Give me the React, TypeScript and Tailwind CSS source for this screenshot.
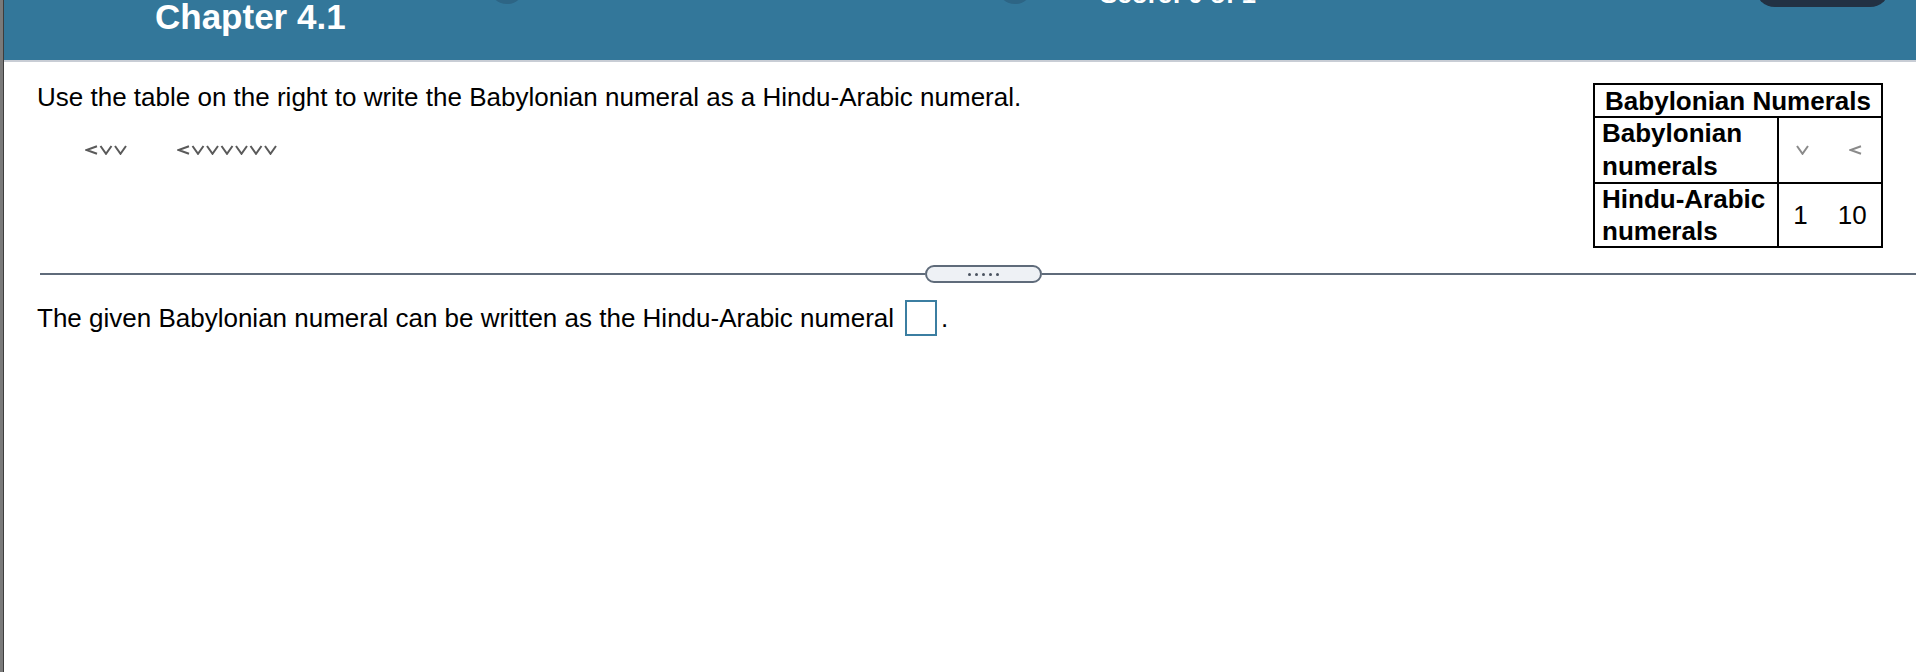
import React from 'react';

const FONT = { fontFamily: '"Liberation Sans", Arial, Helvetica, sans-serif' };

// draws a row of wedge glyphs: '<' = ten, 'v' = one
function Wedges({ marks, color, pitch = 14.5 }: { marks: string; color: string; pitch?: number }) {
  const w = Math.ceil(marks.length * pitch);
  return (
    <svg width={w} height={10} viewBox={`0 0 ${w} 10`} className="block">
      {marks.split('').map((m, i) => {
        const x = i * pitch;
        return m === '<' ? (
          <path key={i} d={`M${x + 12} 1.2 L${x + 1.5} 5 L${x + 12} 8.8`} fill="none" stroke={color} strokeWidth={2} />
        ) : (
          <path key={i} d={`M${x + 1} 1 L${x + 6.5} 8.8 L${x + 12} 1`} fill="none" stroke={color} strokeWidth={2} />
        );
      })}
    </svg>
  );
}

export default function App() {
  return (
    <div className="flex h-[672px] w-full overflow-hidden bg-white text-black" style={FONT}>
      <div className="w-[4px] shrink-0 bg-[#7a7a7a] border-r border-[#3d3d3d]" />

      <div className="flex-1 flex flex-col min-w-0">
        <div className="h-[62px] flex items-start bg-[#33779a] border-b-2 border-[#c8cdd5] overflow-hidden">
          <div className="w-[485px] shrink-0 pl-[151px] -mt-[1px]">
            <h1 className="text-[35px] font-bold leading-none text-white">Chapter 4.1</h1>
          </div>
          <div className="w-[36px] h-[36px] -mt-[32px] rounded-full bg-[#2d6585] shrink-0" />
          <div className="w-[36px] h-[36px] -mt-[32px] ml-[472px] rounded-full bg-[#2d6585] shrink-0" />
          <span className="ml-[67px] -mt-[19px] text-[26px] font-bold leading-none text-white whitespace-nowrap">Score: 0 of 1</span>
          <div className="ml-auto mr-[26px] w-[135px] h-[40px] -mt-[33px] rounded-[22px] bg-[#223143] shrink-0" />
        </div>

        <div className="flex justify-between pl-[33px] pr-[33px] pt-[20px]">
          <div>
            <p className="text-[26px] leading-[30px]">Use the table on the right to write the Babylonian numeral as a Hindu-Arabic numeral.</p>
            <div className="flex items-center mt-[33px] pl-[48px] gap-[48px]">
              <Wedges marks="<vv" color="#5a5a5a" />
              <Wedges marks="<vvvvvv" color="#5a5a5a" />
            </div>
          </div>

          <div className="mt-[1px] w-[290px] border-2 border-black text-[26px] font-bold shrink-0">
            <div className="h-[33px] flex items-center justify-center border-b-2 border-black leading-none">Babylonian Numerals</div>
            <div className="flex h-[66px] border-b-2 border-black">
              <div className="w-[184px] border-r-2 border-black pl-[7px] flex flex-col justify-center leading-[33px]">
                <span>Babylonian</span>
                <span>numerals</span>
              </div>
              <div className="flex-1 flex items-center justify-center gap-[38px]">
                <Wedges marks="v" color="#8a8a8a" />
                <Wedges marks="<" color="#8a8a8a" />
              </div>
            </div>
            <div className="flex h-[62px]">
              <div className="w-[184px] border-r-2 border-black pl-[7px] flex flex-col justify-center leading-[32px]">
                <span>Hindu-Arabic</span>
                <span>numerals</span>
              </div>
              <div className="flex-1 flex items-center justify-center gap-[30px] font-normal">
                <span>1</span>
                <span>10</span>
              </div>
            </div>
          </div>
        </div>

        <div className="flex items-center h-[18px] mt-[17px] pl-[36px]">
          <div className="w-[885px] h-[2px] bg-[#5f6b7a] shrink-0" />
          <div className="w-[117px] h-[18px] shrink-0 rounded-full border-2 border-[#5f6b7a] bg-[#eef1f5] flex items-center justify-center gap-[4px]">
            {[0, 1, 2, 3, 4].map(i => (
              <span key={i} className="w-[3px] h-[3px] rounded-full bg-[#4a5360]" />
            ))}
          </div>
          <div className="flex-1 h-[2px] bg-[#5f6b7a]" />
        </div>

        <div className="flex items-center mt-[17px] pl-[33px] text-[26px] leading-[30px]">
          <span>The given Babylonian numeral can be written as the Hindu-Arabic numeral</span>
          <span className="ml-[11px] w-[32px] h-[36px] border-2 border-[#3b7ea1] inline-block" />
          <span className="ml-[4px]">.</span>
        </div>
      </div>
    </div>
  );
}
